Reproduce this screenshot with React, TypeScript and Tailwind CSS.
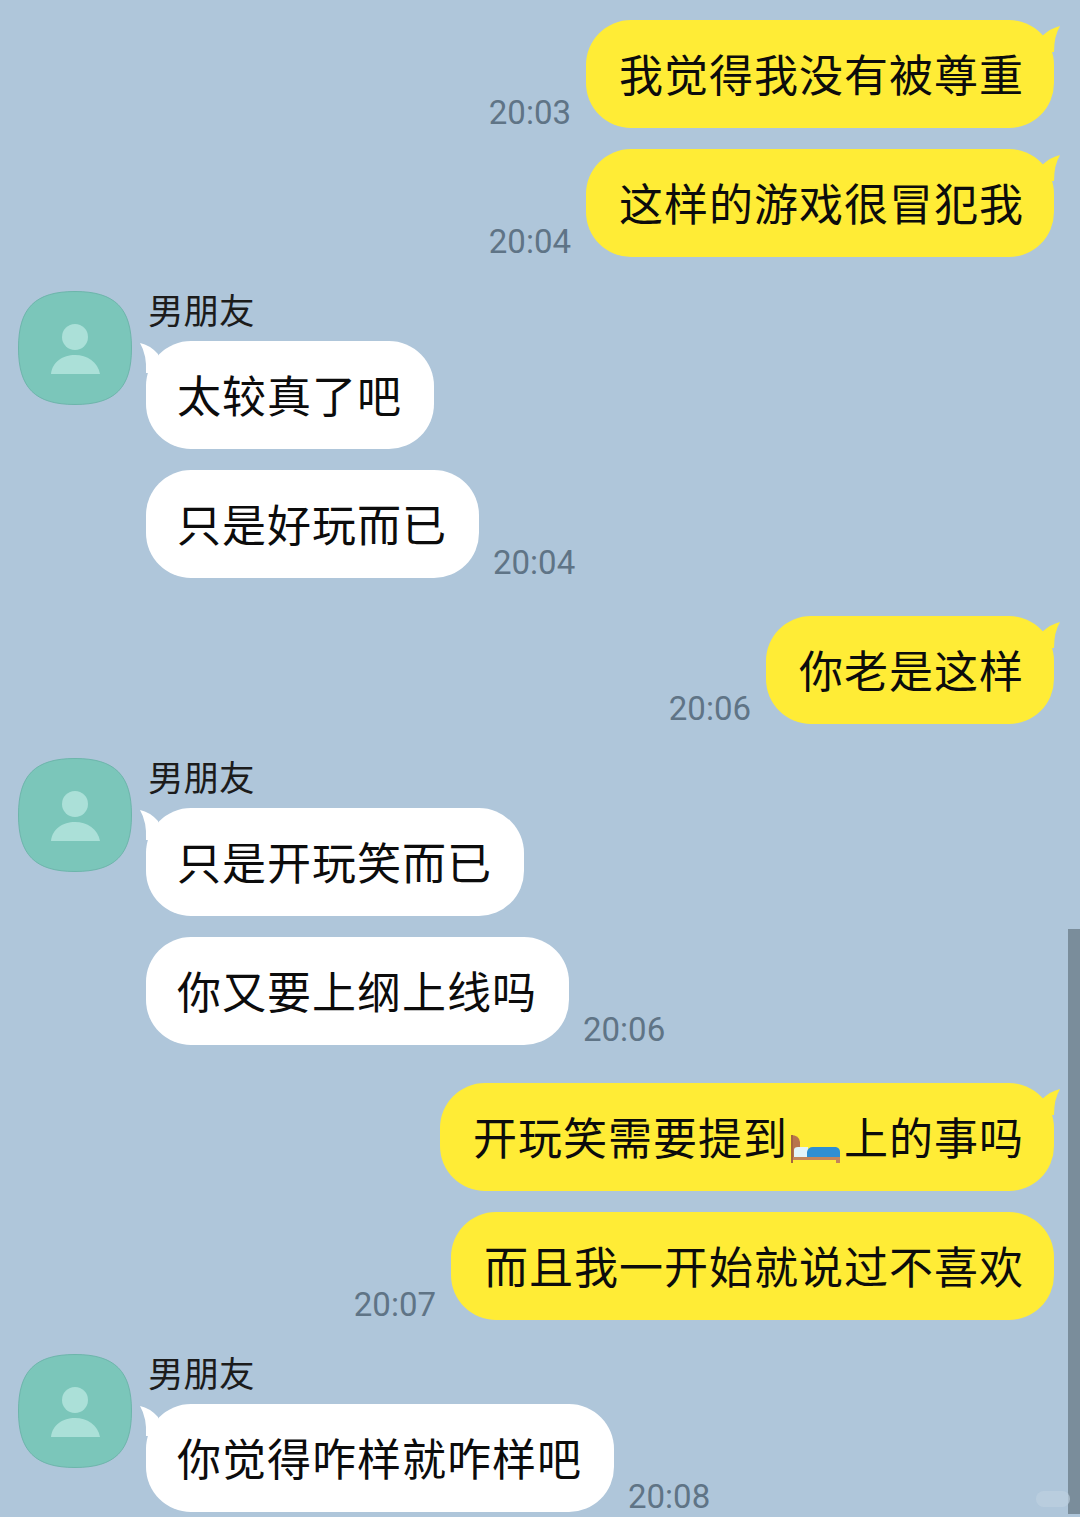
import React from 'react'

const font = { fontFamily: '"Noto Sans CJK SC", sans-serif' }

const Time = ({ children, className = '' }: { children: string; className?: string }) => (
  <span className={`font-['Roboto',sans-serif] text-[33px] leading-[32px] text-[#5f7486] whitespace-nowrap ${className}`}>
    {children}
  </span>
)

const RightTail = () => (
  <svg className="absolute right-[-6px] top-[2px]" width="24" height="36" viewBox="0 0 24 36">
    <path d="M6 14 Q15 6 24 4 Q18 14 18 30 L6 30Z" fill="#ffec36" />
  </svg>
)

const LeftTail = () => (
  <svg className="absolute left-[-6px] top-[2px]" width="24" height="36" viewBox="0 0 24 36">
    <path d="M0 0 Q10 2 18 11 L18 30 L6 30 Q7 12 0 0Z" fill="#ffffff" />
  </svg>
)

const Bubble = ({ side, tail, children }: { side: 'left' | 'right'; tail?: boolean; children: React.ReactNode }) => (
  <div
    className={`relative flex h-[108px] items-center rounded-[45px] pb-[3px] text-[44px] leading-none tracking-[1px] whitespace-nowrap text-[#0c0c0c] ${
      side === 'right' ? 'bg-[#ffec36] pl-[33px] pr-[30px]' : 'bg-white pl-[31px] pr-[32px]'
    }`}
  >
    {tail && (side === 'right' ? <RightTail /> : <LeftTail />)}
    <span>{children}</span>
  </div>
)

const Avatar = () => (
  <svg width="114" height="114" viewBox="0 0 114 114" className="shrink-0">
    <path
      d="M57 .5C97 .5 113.500 17 113.500 57S97 113.500 57 113.500 .5 97 .5 57 17 .5 57 .5Z"
      fill="#7bc6ba"
      stroke="#6db5ab"
    />
    <circle cx="57" cy="46" r="13" fill="#abe0d8" />
    <path d="M33 83C34 71 45 64 57 64S80 71 82 83Z" fill="#abe0d8" />
  </svg>
)

const Bed = () => (
  <svg className="-my-2 inline-block align-[-1px]" width="56" height="30" viewBox="0 0 56 30">
    <path d="M3 1 Q11 1 12 8 V24 H3Z" fill="#b8734c" />
    <path d="M3 1 H5 V29 H3Z" fill="#a5653f" />
    <path d="M5 23 H52 V29 H48 V26 H5Z" fill="#c4855a" />
    <path d="M6 23 V16 Q6 13 10 13 H20 V23Z" fill="#e3f4fa" />
    <path d="M19 23 V18 Q20 13 25 13 H48 Q52 14 52 18 V23Z" fill="#2e8fd2" />
  </svg>
)

const RightRow = ({ time, tail, className = '', children }: { time?: string; tail?: boolean; className?: string; children: React.ReactNode }) => (
  <div className={`flex items-end justify-end gap-[15px] pr-[26px] ${className}`}>
    {time && <Time className="mb-[-1px]">{time}</Time>}
    <Bubble side="right" tail={tail}>{children}</Bubble>
  </div>
)

const LeftGroup = ({ className = '', children }: { className?: string; children: React.ReactNode }) => (
  <div className={`flex gap-[14px] pl-[18px] ${className}`}>
    <Avatar />
    <div className="flex flex-col gap-[21px]">
      <div className="mb-[-21px] h-[50px] pl-[2px] text-[35.500px] leading-[36px] text-[#1c1c1c]">男朋友</div>
      {children}
    </div>
  </div>
)

const LeftRow = ({ time, tail, children }: { time?: string; tail?: boolean; children: React.ReactNode }) => (
  <div className="flex items-end gap-[14px]">
    <Bubble side="left" tail={tail}>{children}</Bubble>
    {time && <Time className="mb-[-1px]">{time}</Time>}
  </div>
)

export default function App() {
  return (
    <div className="relative h-[1517px] w-[1080px] overflow-hidden bg-[#afc6da] pt-[20px]" style={font}>
      <div className="flex flex-col gap-[21px]">
        <RightRow time="20:03" tail>我觉得我没有被尊重</RightRow>
        <RightRow time="20:04" tail>这样的游戏很冒犯我</RightRow>
      </div>

      <LeftGroup className="mt-[34px]">
        <LeftRow tail>太较真了吧</LeftRow>
        <LeftRow time="20:04">只是好玩而已</LeftRow>
      </LeftGroup>

      <RightRow time="20:06" tail className="mt-[38px]">你老是这样</RightRow>

      <LeftGroup className="mt-[34px]">
        <LeftRow tail>只是开玩笑而已</LeftRow>
        <LeftRow time="20:06">你又要上纲上线吗</LeftRow>
      </LeftGroup>

      <div className="mt-[38px] flex flex-col gap-[21px]">
        <RightRow tail>开玩笑需要提到<Bed />上的事吗</RightRow>
        <RightRow time="20:07">而且我一开始就说过不喜欢</RightRow>
      </div>

      <LeftGroup className="mt-[34px]">
        <LeftRow time="20:08" tail>你觉得咋样就咋样吧</LeftRow>
      </LeftGroup>

      {/* scrollbar + faint watermark pill */}
      <div className="absolute right-0 top-[929px] h-[585px] w-[12px] bg-[#7a8d9b]" />
      <div className="absolute left-[1036px] top-[1491px] h-[16px] w-[34px] rounded-full bg-[#bdd0e0]/70" />
    </div>
  )
}
